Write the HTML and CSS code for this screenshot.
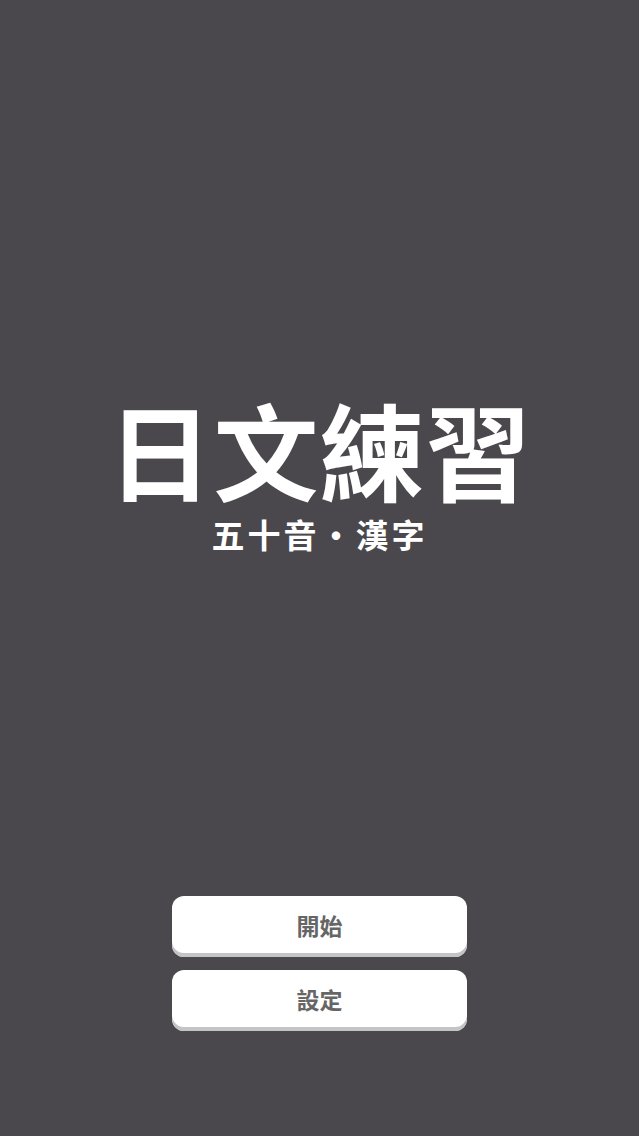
FILE: index.html
```html
<!DOCTYPE html>
<html lang="zh-Hant">
<head>
<meta charset="utf-8">
<link rel="stylesheet" href="styles.css">
</head>
<body>
<div class="screen">
  <div class="hero">
    <h1 class="title">日文練習</h1>
    <p class="subtitle">五十音・漢字</p>
  </div>
  <div class="actions">
    <button class="btn">開始</button>
    <button class="btn">設定</button>
  </div>
</div>
</body>
</html>
```
FILE: styles.css
```css
html, body {
  margin: 0;
  padding: 0;
  background: #4a484c;
}
.screen {
  width: 639px;
  height: 1136px;
  display: flex;
  flex-direction: column;
  align-items: center;
  font-family: "Noto Sans CJK TC", "Noto Sans CJK JP", sans-serif;
}
.hero {
  margin-top: 392px;
  display: flex;
  flex-direction: column;
  align-items: center;
}
.title {
  margin: 0;
  color: #fff;
  font-size: 105px;
  font-weight: 700;
  line-height: 110px;
  letter-spacing: 1px;
}
.subtitle {
  margin: 12px 0 0;
  color: #fff;
  font-size: 33px;
  font-weight: 700;
  line-height: 40px;
  letter-spacing: 3px;
}
.actions {
  margin-top: 342px;
  display: flex;
  flex-direction: column;
  gap: 13px;
}
.btn {
  width: 295px;
  height: 61px;
  border: none;
  border-radius: 12px;
  background: #ffffff;
  box-shadow: inset 0 -4px 0 #c4c3c5;
  color: #666666;
  font-family: "Noto Sans CJK TC", "Noto Sans CJK JP", sans-serif;
  font-size: 23px;
  font-weight: 700;
  padding: 0 0 4px;
}
```
